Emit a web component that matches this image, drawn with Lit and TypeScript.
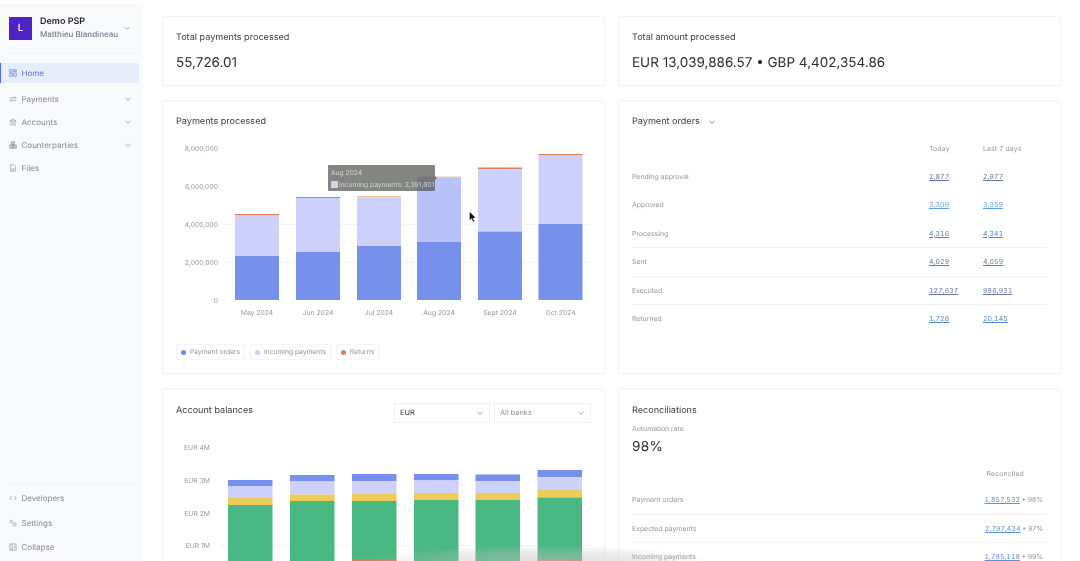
import { LitElement, html, css, svg } from "lit";
import { customElement } from "lit/decorators.js";

const chev = html`<svg class="chev" viewBox="0 0 8 8"><path d="M1.5 3 4 5.3 6.5 3" fill="none" stroke="currentColor" stroke-width=".8"/></svg>`;
const ic = (body: unknown) => html`<svg class="ic" viewBox="0 0 10 10" fill="none" stroke="currentColor" stroke-width=".8">${body}</svg>`;
const icons = {
  home: ic(svg`<rect x="1" y="1" width="3" height="3"/><rect x="6" y="1" width="3" height="2"/><rect x="1" y="6" width="3" height="3"/><rect x="6" y="5" width="3" height="4"/>`),
  pay: ic(svg`<path d="M1 3.5h8M7 1.8l2 1.7M9 6.5H1M3 8.2 1 6.5"/>`),
  acc: ic(svg`<path d="M1 3.8 5 1.2l4 2.6zM2.5 4.5v3M5 4.5v3M7.5 4.5v3M1 8.6h8"/>`),
  cp: ic(svg`<rect x="3.4" y="1" width="3.2" height="3.6" fill="currentColor" fill-opacity=".4"/><rect x="1" y="5" width="3.6" height="4" fill="currentColor" fill-opacity=".4"/><rect x="5.4" y="5" width="3.6" height="4" fill="currentColor" fill-opacity=".4"/>`),
  file: ic(svg`<path d="M2 1h4l2 2v6H2zM3.5 6h3M3.5 7.5h3"/>`),
  dev: ic(svg`<path d="M3.5 2.5 1 5l2.5 2.5M6.5 2.5 9 5 6.5 7.5"/>`),
  set: ic(svg`<circle cx="2.8" cy="3" r="1.6"/><rect x="5" y="5" width="3.6" height="3.6" rx="1"/>`),
  col: ic(svg`<rect x="1.2" y="1.2" width="7.6" height="7.6"/><path d="M4 1.2v7.6M6.8 3.6v2.8"/>`),
};

const BLUE = "#7690ec", LAV = "#cfd1fd", RET = "#d9805f", GREEN = "#4ab882", YEL = "#f0ca58";

const bars1 = [
  { x: 235, l: "May 2024", ret: 214, lav: 215.5, blue: 256 },
  { x: 296, l: "Jun 2024", ret: 197, lav: 198, blue: 252 },
  { x: 357, l: "Jul 2024", ret: 196, lav: 197.5, blue: 246 },
  { x: 417, l: "Aug 2024", ret: 176.5, lav: 178, blue: 242, hover: true },
  { x: 478, l: "Sept 2024", ret: 167.5, lav: 169, blue: 231.5 },
  { x: 538.5, l: "Oct 2024", ret: 154, lav: 155.5, blue: 224 },
];
const ticks1 = [["8,000,000", 148], ["6,000,000", 186], ["4,000,000", 224], ["2,000,000", 262], ["0", 300]] as const;

const bars2 = [
  { x: 228, t: [480, 486, 498, 505] },
  { x: 290, t: [475, 481.5, 494.5, 501] },
  { x: 352, t: [474, 481, 494, 501], ret: true },
  { x: 414, t: [474, 480.5, 493, 500] },
  { x: 475.5, t: [474.5, 481, 493, 500] },
  { x: 537.5, t: [470, 477, 490, 497.5], ret: true },
];
const ticks2 = [["EUR 4M", 447.5], ["EUR 3M", 480.5], ["EUR 2M", 513], ["EUR 1M", 545]] as const;

const orders = [
  ["Pending approval", "2,877", "2,977", "dim", ""],
  ["Approved", "3,309", "3,359", "sky", ""],
  ["Processing", "4,316", "4,341", "", ""],
  ["Sent", "4,029", "4,059", "dim", "line"],
  ["Executed", "127,637", "986,931", "dim", "line"],
  ["Returned", "1,726", "20,145", "", "line"],
];
const recon = [
  ["Payment orders", "1,857,533", "98%", ""],
  ["Expected payments", "2,797,434", "97%", "line"],
  ["Incoming payments", "1,785,118", "99%", "line"],
];

@customElement("app-root")
export class AppRoot extends LitElement {
  static styles = css`
    :host { display: block; width: 1080px; height: 561px; overflow: hidden; background: #fff; font-family: Inter, "Liberation Sans", sans-serif; position: relative; text-rendering: geometricPrecision; }
    .layout { display: flex; height: 561px; will-change: transform; }
    .side { width: 143px; margin-top: 4px; background: #f8f9fb; display: flex; flex-direction: column; flex: none; color: #868b96; font-size: 8px; }
    .acct { display: flex; align-items: center; gap: 8px; padding: 10px 12px 0 9px; height: 38px; box-sizing: border-box; }
    .logo { width: 23px; height: 23px; background: #4f22c4; color: #fff; font-size: 10px; font-weight: 500; display: flex; align-items: center; justify-content: center; flex: none; }
    .who { flex: 1; line-height: 12px; white-space: nowrap; min-width: 0; }
    .who b { display: block; font-size: 9px; font-weight: 600; color: #1d2230; }
    .who span { font-size: 8px; color: #777d8a; font-weight: 500; }
    .chev { width: 8px; height: 8px; color: #8b909a; flex: none; }
    .rule { height: 1px; background: #eef0f3; margin: 11px 8px 9px 9px; }
    .nav { display: flex; flex-direction: column; }
    .item { display: flex; align-items: center; gap: 4.5px; height: 23px; padding: 0 11px 0 9px; }
    .item span { flex: 1; }
    .item.home { height: 20px; margin: 0 4px 4.5px 0; background: #e6ecf9; color: #5a75cc; box-shadow: inset 1px 0 #4a6fe0; padding-right: 7px; }
    .ic { width: 8px; height: 8px; flex: none; }
    .spacer { flex: 1; }
    .foot .item { height: 24.5px; }
    .foot .rule { margin: 0 8px 2px 9px; }
    .foot { padding-bottom: 1.5px; }

    .main { flex: 1; padding: 16px 19px 0 19px; display: grid; grid-template-columns: 443px 443px; column-gap: 13px; row-gap: 14px; grid-template-rows: 70px 274px 300px; align-content: start; }
    .card { border: 1px solid #f1f2f4; border-radius: 2px; box-sizing: border-box; background: #fff; position: relative; min-width: 0; }
    .title { font-size: 9.1px; color: #373b45; line-height: 12px; padding: 15px 13px 0; display: block; }
    .title.low { padding-top: 16px; }
    .stat { font-size: 13.5px; color: #2a2e36; padding: 10px 13px 0; line-height: 18px; white-space: nowrap; }
    svg.chart { display: block; font-family: Inter, "Liberation Sans", sans-serif; }
    svg.chart text { font-size: 6.8px; fill: #94989f; }

    .legend { display: flex; gap: 5px; padding: 0 13px; margin-top: 16px; }
    .chip { display: flex; align-items: center; gap: 4px; height: 16px; box-sizing: border-box; border: 1px solid #f3f4f6; padding: 0 4px; font-size: 6.7px; color: #8e929a; }
    .dot { width: 5px; height: 5px; border-radius: 50%; }
    .d1 { background: #6f8ae4; } .d2 { background: #cfd1fd; } .d3 { background: #d9805f; }

    .tip { position: absolute; left: 165px; top: 64px; width: 107px; height: 26px; background: rgba(90, 92, 90, .75); color: #d2d3d2; font-size: 6.7px; padding: 3px 0 0 3px; box-sizing: border-box; line-height: 11px; white-space: nowrap; border-radius: 1px; }
    .tip::after { content: ""; position: absolute; left: 100%; top: 11px; border: 2.5px solid transparent; border-left-color: rgba(90, 92, 90, .75); }
    .tip i { display: inline-block; width: 7px; height: 7px; background: #dcd0e6; margin-right: 1px; vertical-align: -1px; }
    .tip div + div { margin-top: 1px; }
    .cursor { position: absolute; left: 306px; top: 110px; width: 8px; height: 12px; }

    .head { display: flex; align-items: center; gap: 8px; padding: 15px 13px 0; font-size: 9.1px; line-height: 12px; color: #373b45; }
    .head .chev { color: #555a64; }
    .tbl { padding: 0 13px; margin-top: 6.7px; font-size: 6.9px; color: #92969e; }
    .row { display: grid; grid-template-columns: 297px 54px 1fr; height: 28.35px; align-items: center; box-sizing: border-box; }
    .row.line { border-top: 1px solid #f1f2f4; }
    .row.h { height: 27.6px; letter-spacing: .15px; }
    .tbl a { color: #4a86c8; text-decoration: underline; text-underline-offset: 1px; letter-spacing: .1px; font-variant-numeric: tabular-nums; }
    .tbl a.dim { color: #66789f; }
    .tbl a.sky { color: #5a9fe0; }

    .selects { position: absolute; right: 13px; top: 14px; display: flex; gap: 4px; }
    .sel { width: 96px; height: 19.5px; box-sizing: border-box; border: 1px solid #f0f1f3; display: flex; align-items: center; justify-content: space-between; padding: 0 5px 0 5px; font-size: 7.4px; color: #343842; }
    .sel.muted { color: #8a8f97; width: 97px; }
    .sub { font-size: 6.9px; color: #92969e; padding: 7px 13px 0; line-height: 10px; }
    .big { font-size: 13.6px; color: #2a2e36; padding: 3px 13px 0; line-height: 20px; letter-spacing: .3px; }
    .rc { padding: 0 13px; margin-top: 5px; font-size: 6.9px; color: #92969e; }
    .rr { display: flex; justify-content: space-between; align-items: center; height: 28.3px; box-sizing: border-box; }
    .rr.line { border-top: 1px solid #f1f2f4; }
    .rr.h { height: 23.5px; justify-content: flex-end; padding-right: 19px; letter-spacing: .15px; }
    .rc a { color: #5a94d8; text-decoration: underline; text-underline-offset: 1px; letter-spacing: .05px; font-variant-numeric: tabular-nums; }
    .rr span:last-child { padding-right: 4px; }
    .smear { position: absolute; left: 370px; width: 340px; bottom: 0; height: 16px; background: radial-gradient(ellipse 50% 100% at 50% 100%, rgba(190, 190, 190, .5), rgba(190, 190, 190, .3) 60%, rgba(190, 190, 190, 0)); pointer-events: none; }
  `;

  chart1() {
    return svg`<svg class="chart" width="441" height="200" viewBox="163 128 441 200">
      ${[224, 262].map((y) => svg`<rect x="224" y="${y}" width="368" height="1" fill="#f3f4f6"/>`)}
      ${ticks1.map(([t, y]) => svg`<text x="218" y="${y + 2.5}" text-anchor="end">${t}</text>`)}
      ${bars1.map((b) => svg`
        <rect x="${b.x}" y="${b.ret}" width="44" height="${b.lav - b.ret}" fill="${b.hover || b.x === 357 ? "#efc4ac" : RET}"/>
        <rect x="${b.x}" y="${b.lav}" width="44" height="${b.blue - b.lav}" fill="${b.hover ? "#b9c3fb" : LAV}"/>
        <rect x="${b.x}" y="${b.blue}" width="44" height="${300 - b.blue}" fill="${BLUE}"/>
        <text x="${b.x + 22}" y="315" text-anchor="middle">${b.l}</text>`)}
    </svg>`;
  }

  chart2() {
    const w = 44.5;
    return svg`<svg class="chart" width="441" height="146" viewBox="163 417 441 146">
      <rect x="220" y="545" width="371" height="1" fill="#eef0f2"/>
      ${ticks2.map(([t, y]) => svg`<text x="210" y="${y + 2.5}" text-anchor="end">${t}</text>`)}
      ${bars2.map((b) => svg`
        <rect x="${b.x}" y="${b.t[0]}" width="${w}" height="${b.t[1] - b.t[0]}" fill="${BLUE}"/>
        <rect x="${b.x}" y="${b.t[1]}" width="${w}" height="${b.t[2] - b.t[1]}" fill="${LAV}"/>
        <rect x="${b.x}" y="${b.t[2]}" width="${w}" height="${b.t[3] - b.t[2]}" fill="${YEL}"/>
        <rect x="${b.x}" y="${b.t[3]}" width="${w}" height="${563 - b.t[3]}" fill="${GREEN}"/>
        ${b.ret ? svg`<rect x="${b.x}" y="559.5" width="${w}" height="2" fill="${RET}"/>` : ""}`)}
    </svg>`;
  }

  render() {
    return html`<div class="layout">
      <aside class="side">
        <div class="acct">
          <div class="logo">L</div>
          <div class="who"><b>Demo PSP</b><span>Matthieu Blandineau</span></div>
          ${chev}
        </div>
        <div class="rule"></div>
        <nav class="nav">
          <div class="item home">${icons.home}<span>Home</span></div>
          <div class="item">${icons.pay}<span>Payments</span>${chev}</div>
          <div class="item">${icons.acc}<span>Accounts</span>${chev}</div>
          <div class="item">${icons.cp}<span>Counterparties</span>${chev}</div>
          <div class="item">${icons.file}<span>Files</span></div>
        </nav>
        <div class="spacer"></div>
        <div class="foot">
          <div class="rule"></div>
          <div class="item">${icons.dev}<span>Developers</span></div>
          <div class="item">${icons.set}<span>Settings</span></div>
          <div class="item">${icons.col}<span>Collapse</span></div>
        </div>
      </aside>
      <main class="main">
        <section class="card"><span class="title">Total payments processed</span><div class="stat">55,726.01</div></section>
        <section class="card"><span class="title">Total amount processed</span><div class="stat">EUR 13,039,886.57 • GBP 4,402,354.86</div></section>
        <section class="card">
          <span class="title">Payments processed</span>
          ${this.chart1()}
          <div class="legend">
            <div class="chip"><i class="dot d1"></i>Payment orders</div>
            <div class="chip"><i class="dot d2"></i>Incoming payments</div>
            <div class="chip"><i class="dot d3"></i>Returns</div>
          </div>
          <div class="tip"><div>Aug 2024</div><div><i></i>Incoming payments: 3,391,601</div></div>
          <svg class="cursor" viewBox="0 0 8 12"><path d="M.5.5v9l2-2 1.5 3.5 1.5-.7L4 7h3z" fill="#111" stroke="#fff" stroke-width=".4"/></svg>
        </section>
        <section class="card">
          <div class="head">Payment orders ${chev}</div>
          <div class="tbl">
            <div class="row h"><span></span><span>Today</span><span>Last 7 days</span></div>
            ${orders.map((r) => html`<div class="row ${r[4]}"><span>${r[0]}</span><span><a class="${r[3]}">${r[1]}</a></span><span><a class="${r[3]}">${r[2]}</a></span></div>`)}
          </div>
        </section>
        <section class="card">
          <span class="title low">Account balances</span>
          <div class="selects">
            <div class="sel">EUR ${chev}</div>
            <div class="sel muted">All banks ${chev}</div>
          </div>
          ${this.chart2()}
        </section>
        <section class="card">
          <span class="title low">Reconciliations</span>
          <div class="sub">Automation rate</div>
          <div class="big">98%</div>
          <div class="rc">
            <div class="rr h"><span>Reconciled</span></div>
            ${recon.map((r) => html`<div class="rr ${r[3]}"><span>${r[0]}</span><span><a>${r[1]}</a> • ${r[2]}</span></div>`)}
          </div>
        </section>
      </main>
    </div>
    <div class="smear"></div>`;
  }
}
